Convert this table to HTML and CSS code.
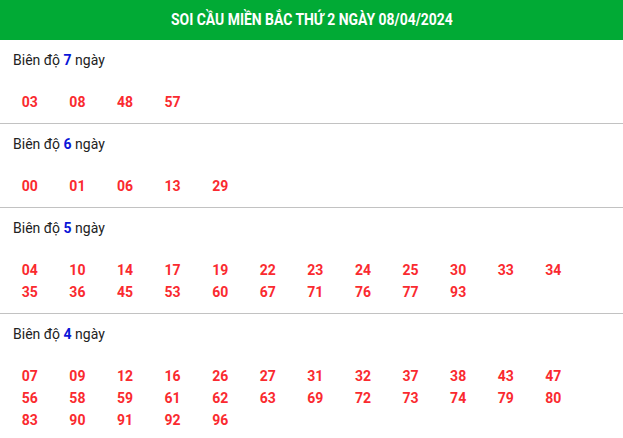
FILE: index.html
```html
<!DOCTYPE html>
<html lang="vi">
<head>
  <meta charset="UTF-8" />
  <meta name="viewport" content="width=device-width, initial-scale=1.0"/>
  <title>Soi cầu miền Bắc</title>
  <link rel="stylesheet" href="styles.css">
</head>
<body>

  <header class="title-bar">
    <h2><span>SOI CẦU MIỀN BẮC THỨ 2 NGÀY 08/04/2024</span></h2>
  </header>

  <section class="range">
    <p class="range-label">Biên độ <b>7</b> ngày</p>
    <div class="numbers">
      <span>03</span><span>08</span><span>48</span><span>57</span>
    </div>
  </section>

  <section class="range">
    <p class="range-label">Biên độ <b>6</b> ngày</p>
    <div class="numbers">
      <span>00</span><span>01</span><span>06</span><span>13</span><span>29</span>
    </div>
  </section>

  <section class="range">
    <p class="range-label">Biên độ <b>5</b> ngày</p>
    <div class="numbers">
      <span>04</span><span>10</span><span>14</span><span>17</span><span>19</span><span>22</span>
      <span>23</span><span>24</span><span>25</span><span>30</span><span>33</span><span>34</span>
      <span>35</span><span>36</span><span>45</span><span>53</span><span>60</span><span>67</span>
      <span>71</span><span>76</span><span>77</span><span>93</span>
    </div>
  </section>

  <section class="range">
    <p class="range-label">Biên độ <b>4</b> ngày</p>
    <div class="numbers">
      <span>07</span><span>09</span><span>12</span><span>16</span><span>26</span><span>27</span>
      <span>31</span><span>32</span><span>37</span><span>38</span><span>43</span><span>47</span>
      <span>56</span><span>58</span><span>59</span><span>61</span><span>62</span><span>63</span>
      <span>69</span><span>72</span><span>73</span><span>74</span><span>79</span><span>80</span>
      <span>83</span><span>90</span><span>91</span><span>92</span><span>96</span>
    </div>
  </section>

</body>
</html>
```

FILE: styles.css
```css
body {
  font-family: Roboto, "Noto Sans", Arial, sans-serif;
  margin: 0;
  padding: 0;
  background-color: #fff;
  color: #222;
}

.title-bar {
  background: #01aa35;
  color: #fff;
  height: 40px;
  display: flex;
  justify-content: center;
  align-items: center;
}

.title-bar h2 {
  margin: 0;
  font-size: 16px;
  font-weight: bold;
  line-height: 20px;
}

.title-bar h2 span {
  display: inline-block;
  transform: scaleX(0.87);
  white-space: nowrap;
}

.range {
  padding: 10px 0;
  border-bottom: 1px solid #c2c2c2;
}

.range:last-child {
  border-bottom: none;
}

.range-label {
  margin: 0 0 21px 13px;
  font-size: 14px;
  line-height: 20px;
}

.range-label b {
  color: #0a16d8;
  font-weight: bold;
}

.numbers {
  display: grid;
  grid-template-columns: repeat(12, 47.6px);
  padding-left: 6px;
}

.numbers span {
  text-align: center;
  color: #fa2a2f;
  font-weight: bold;
  font-size: 14px;
  line-height: 22px;
}
```
